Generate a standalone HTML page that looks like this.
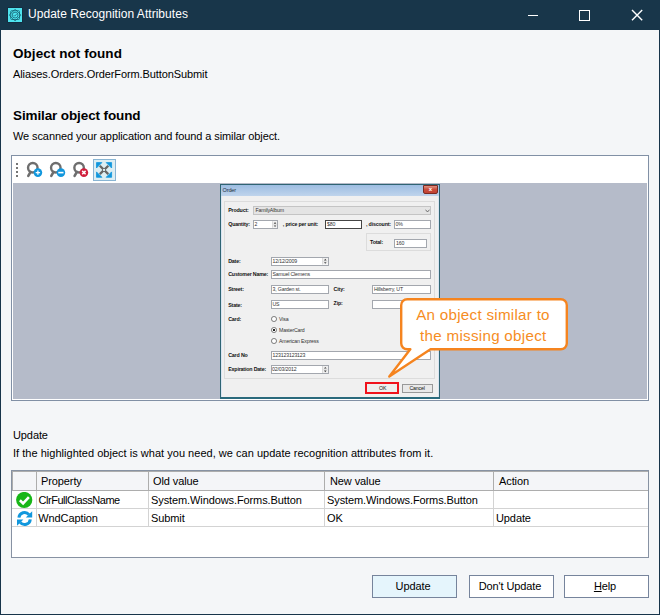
<!DOCTYPE html>
<html lang="en">
<head>
<meta charset="utf-8">
<title>Update Recognition Attributes</title>
<style>
html,body{margin:0;padding:0;}
body{width:660px;height:615px;overflow:hidden;background:#f4f6f8;font-family:"Liberation Sans",sans-serif;font-size:11px;color:#000;position:relative;}
.abs{position:absolute;}
#win{position:absolute;left:0;top:0;width:660px;height:615px;box-sizing:border-box;border-left:1px solid #17344a;border-right:1px solid #17344a;border-bottom:1px solid #17344a;background:#f4f6f8;}
#titlebar{position:absolute;left:0;top:0;width:660px;height:30px;background:#18364a;}
#title{position:absolute;left:28px;top:7px;font-size:12px;line-height:15px;color:#fff;white-space:nowrap;letter-spacing:0.04px;}
.t{position:absolute;white-space:nowrap;line-height:14px;letter-spacing:-0.1px;}
.h{position:absolute;white-space:nowrap;font-weight:bold;font-size:13.5px;line-height:16px;}
#panel{position:absolute;left:11px;top:155px;width:638px;height:246px;box-sizing:border-box;border:1px solid #8190a5;background:#fff;}
#gray{position:absolute;left:13px;top:183px;width:634px;height:216px;background:#b5bbc9;overflow:hidden;}
.btn{position:absolute;top:575px;width:85px;height:23px;box-sizing:border-box;border:1px solid #76849c;background:#fff;text-align:center;line-height:21px;letter-spacing:-0.1px;padding-right:3px;}
#grid{position:absolute;left:11px;top:470px;width:638px;height:88px;box-sizing:border-box;border:1px solid #8792a3;background:#fff;}

#ord{position:absolute;left:219.5px;top:183.5px;width:220.2px;height:215.3px;background:#f0f0f0;box-sizing:border-box;border:1px solid #2f6473;border-bottom:2px solid #2a6a7c;overflow:hidden;}
#ord .tb{position:absolute;left:0;top:0;width:218px;height:11px;background:linear-gradient(#9dbde2,#bfd4ec);}
#ord .fr{position:absolute;left:0;top:11px;width:218px;height:203px;box-sizing:border-box;border-left:1px solid #d9e5f2;border-right:1px solid #d9e5f2;border-bottom:1px solid #d9e5f2;}
#ord .l{position:absolute;font-size:5.3px;line-height:7px;font-weight:bold;white-space:nowrap;color:#111;letter-spacing:-0.17px;}
#ord .v{position:absolute;font-size:5.2px;line-height:7px;white-space:nowrap;color:#333;letter-spacing:-0.15px;}
#ord .i{position:absolute;box-sizing:border-box;border:1px solid #a3a7ae;background:#fff;}
#ord .gb{position:absolute;box-sizing:border-box;border:1px solid #dcdcdc;}
#ord .r{position:absolute;width:5.8px;height:5.8px;box-sizing:border-box;border:0.8px solid #777;border-radius:50%;background:#fff;}

#grid .hd{position:absolute;left:0;top:0;width:636px;height:20px;box-sizing:border-box;border-top:1px solid #adadad;border-left:1px solid #adadad;border-bottom:1px solid #adadad;background:#f4f5f8;}
#grid .vd{position:absolute;top:0;width:1px;height:20px;background:#adadad;}
#grid .vl{position:absolute;top:20px;width:1px;height:36px;background:#d3d3d3;}
#grid .hl{position:absolute;left:0;width:636px;height:1px;background:#d3d3d3;}
#grid .c{position:absolute;white-space:nowrap;line-height:14px;letter-spacing:-0.1px;}
</style>
</head>
<body>
<div id="win"></div>
<div id="titlebar"></div>
<div id="title">Update Recognition Attributes</div>


<!-- title icon -->
<svg class="abs" style="left:7px;top:7px;" width="16" height="16" viewBox="0 0 16 16">
  <rect x="0.5" y="0.5" width="15" height="15" fill="#0d2539"/>
  <rect x="1" y="1" width="14" height="14" fill="#4fe3ee"/>
  <g fill="none" stroke="#0f5565" stroke-width="0.7" stroke-linejoin="round">
    <rect x="3.7" y="3.7" width="8.8" height="8.8" rx="1"/>
    <rect x="3.9" y="3.9" width="8.4" height="8.4" rx="1" transform="rotate(45 8.1 8.1)"/>
    <circle cx="8.1" cy="8.1" r="2.9"/>
    <path d="M6.7 8.2 L7.7 9.2 L9.6 7.1"/>
  </g>
</svg>
<!-- window controls -->
<svg class="abs" style="left:520px;top:0;" width="140" height="30" viewBox="0 0 140 30">
  <rect x="8" y="15" width="10" height="1" fill="#fff"/>
  <rect x="59.5" y="10.5" width="10" height="10" fill="none" stroke="#fff" stroke-width="1"/>
  <path d="M112 10 L122.2 20.2 M122.2 10 L112 20.2" stroke="#fff" stroke-width="1.4" fill="none"/>
</svg>

<div class="h" style="left:13px;top:46px;letter-spacing:0.06px;">Object not found</div>
<div class="t" style="left:13px;top:67px;">Aliases.Orders.OrderForm.ButtonSubmit</div>
<div class="h" style="left:13px;top:108px;letter-spacing:-0.115px;">Similar object found</div>
<div class="t" style="left:13px;top:129px;">We scanned your application and found a similar object.</div>

<div id="panel"></div>
<div id="gray"></div>


<!-- toolbar -->
<svg class="abs" style="left:12px;top:156px;" width="110" height="27" viewBox="12 156 110 27">
  <g fill="#767676">
    <rect x="16" y="163" width="2" height="2"/><rect x="16" y="167" width="2" height="2"/>
    <rect x="16" y="171" width="2" height="2"/><rect x="16" y="175" width="2" height="2"/>
  </g>
  <g id="mag">
    <circle cx="32.8" cy="167.8" r="4.75" fill="none" stroke="#6e6e6e" stroke-width="2.4"/>
    <path d="M30.6 171.8 L28.3 175.8" stroke="#6e6e6e" stroke-width="2.6" stroke-linecap="round" fill="none"/>
  </g>
  <circle cx="37.9" cy="172.6" r="4.3" fill="#1197dd"/>
  <path d="M35.7 172.6 H40.1 M37.9 170.4 V174.8" stroke="#fff" stroke-width="1.3"/>
  <use href="#mag" x="23"/>
  <circle cx="60.9" cy="172.6" r="4.3" fill="#1197dd"/>
  <path d="M58.3 172.6 H63.5" stroke="#fff" stroke-width="1.6"/>
  <use href="#mag" x="46.3"/>
  <circle cx="83.9" cy="172.6" r="4.3" fill="#d01f3c"/>
  <path d="M82.2 170.9 L85.6 174.3 M85.6 170.9 L82.2 174.3" stroke="#fff" stroke-width="1.5"/>
  <rect x="93.5" y="159.5" width="22" height="21" fill="#dceef3" stroke="#88b4d3" stroke-width="1"/>
  <g fill="#1197dd" stroke="#1197dd" stroke-width="0.8" stroke-linejoin="round">
    <path d="M96.5 162.6 h5.4 l-5.4 5.4 z"/>
    <path d="M111.6 162.6 v5.4 l-5.4 -5.4 z"/>
    <path d="M96.5 177.3 v-5.4 l5.4 5.4 z"/>
    <path d="M111.6 177.3 h-5.4 l5.4 -5.4 z"/>
  </g>
  <path d="M99.8 165.8 L108.3 174.1 M108.3 165.8 L99.8 174.1" stroke="#666" stroke-width="2.3" fill="none"/>
  <rect x="102.4" y="168.3" width="3.3" height="3.3" fill="#666"/>
  <rect x="103.05" y="168.95" width="2" height="2" fill="#dceef3"/>
</svg>

<div id="ord"><div class="tb"></div><div class="fr"></div><div style="position:absolute;left:0.5px;top:0.5px;">
<div class="v" style="left:1.6px;top:1.8px;font-size:5.5px;color:#1b2b3c;">Order</div>
<div style="position:absolute;left:202.0px;top:0.0px;width:15px;height:8.5px;background:linear-gradient(#dd9180,#ca4c3c 50%,#c04232);border:1px solid #7a2a22;box-sizing:border-box;border-radius:0 0 2px 2px;color:#fff;font-size:6px;line-height:6.5px;text-align:center;font-weight:bold;">x</div>
<div class="gb" style="left:3.0px;top:16.0px;width:210.5px;height:177.5px;"></div>
<div class="l" style="left:7.2px;top:21.8px;">Product:</div>
<div class="i" style="left:32.0px;top:20.5px;width:178.0px;height:9.5px;background:#e4e4e4;border-color:#c4c4c4;"></div>
<div class="v" style="left:34.5px;top:22.0px;">FamilyAlbum</div>
<svg style="position:absolute;left:203.5px;top:23.5px;" width="5" height="4" viewBox="0 0 5 4"><path d="M0.5 0.7 L2.5 3 L4.5 0.7" fill="none" stroke="#555" stroke-width="0.8"/></svg>
<div class="l" style="left:7.2px;top:35.8px;">Quantity:</div>
<div class="i" style="left:32.0px;top:35.0px;width:25.0px;height:9.0px;"></div>
<div class="v" style="left:33.5px;top:35.8px;">2</div>
<svg style="position:absolute;left:50.5px;top:36.0px;" width="5.5" height="7.0" viewBox="0 0 6 7"><rect x="0" y="0" width="6" height="7" fill="#efefef"/><rect x="0" y="0" width="0.7" height="7" fill="#cfcfcf"/><rect x="0.7" y="3.3" width="5.3" height="0.5" fill="#d8d8d8"/><path d="M1.9 2.6 L3.3 0.9 L4.7 2.6 Z M1.9 4.5 L3.3 6.2 L4.7 4.5 Z" fill="#444"/></svg>
<div class="l" style="left:61.8px;top:35.8px;">, price per unit:</div>
<div class="i" style="left:104.0px;top:35.0px;width:37.0px;height:9.0px;border-color:#444;"></div>
<div class="v" style="left:106.0px;top:36.0px;">$80</div>
<div class="l" style="left:145.0px;top:35.8px;">, discount:</div>
<div class="i" style="left:173.0px;top:35.0px;width:37.0px;height:9.0px;"></div>
<div class="v" style="left:174.5px;top:36.0px;">0%</div>
<div class="gb" style="left:144.5px;top:48.0px;width:65.5px;height:17.5px;"></div>
<div class="l" style="left:149.0px;top:54.1px;">Total:</div>
<div class="i" style="left:173.0px;top:53.5px;width:33.0px;height:9.0px;"></div>
<div class="v" style="left:175.0px;top:54.5px;">160</div>
<div class="l" style="left:7.2px;top:72.5px;">Date:</div>
<div class="i" style="left:49.7px;top:72.0px;width:58.3px;height:8.5px;"></div>
<div class="v" style="left:51.5px;top:72.5px;">12/12/2009</div>
<svg style="position:absolute;left:101.0px;top:73.0px;" width="6.0" height="6.5" viewBox="0 0 6 7"><rect x="0" y="0" width="6" height="7" fill="#efefef"/><rect x="0" y="0" width="0.7" height="7" fill="#cfcfcf"/><rect x="0.7" y="3.3" width="5.3" height="0.5" fill="#d8d8d8"/><path d="M1.9 2.6 L3.3 0.9 L4.7 2.6 Z M1.9 4.5 L3.3 6.2 L4.7 4.5 Z" fill="#444"/></svg>
<div class="l" style="left:7.2px;top:85.7px;">Customer Name:</div>
<div class="i" style="left:49.7px;top:85.0px;width:160.3px;height:9.0px;"></div>
<div class="v" style="left:51.5px;top:86.0px;">Samuel Clemens</div>
<div class="l" style="left:7.2px;top:100.8px;">Street:</div>
<div class="i" style="left:49.7px;top:100.2px;width:58.3px;height:8.8px;"></div>
<div class="v" style="left:51.5px;top:101.0px;">3, Garden st.</div>
<div class="l" style="left:112.6px;top:101.1px;">City:</div>
<div class="i" style="left:151.0px;top:100.2px;width:59.0px;height:8.8px;"></div>
<div class="v" style="left:153.0px;top:101.0px;">Hillsberry, UT</div>
<div class="l" style="left:7.2px;top:117.0px;">State:</div>
<div class="i" style="left:49.7px;top:115.0px;width:58.3px;height:8.5px;"></div>
<div class="v" style="left:51.5px;top:115.8px;">US</div>
<div class="l" style="left:112.6px;top:114.5px;">Zip:</div>
<div class="i" style="left:151.0px;top:115.0px;width:59.0px;height:8.5px;"></div>
<div class="l" style="left:7.2px;top:130.8px;">Card:</div>
<div class="r" style="left:50.0px;top:130.9px;"></div>
<div class="v" style="left:58.0px;top:130.8px;">Visa</div>
<div class="r" style="left:50.0px;top:141.9px;background:radial-gradient(#222 35%,#fff 45%);"></div>
<div class="v" style="left:58.0px;top:141.8px;">MasterCard</div>
<div class="r" style="left:50.0px;top:152.9px;"></div>
<div class="v" style="left:58.0px;top:152.8px;">American Express</div>
<div class="l" style="left:7.2px;top:166.8px;">Card No</div>
<div class="i" style="left:49.7px;top:166.0px;width:160.3px;height:8.5px;"></div>
<div class="v" style="left:51.5px;top:166.8px;">123123123123</div>
<div class="l" style="left:7.2px;top:180.8px;">Expiration Date:</div>
<div class="i" style="left:49.7px;top:179.7px;width:58.3px;height:9.0px;"></div>
<div class="v" style="left:51.0px;top:180.8px;">02/03/2012</div>
<svg style="position:absolute;left:101.0px;top:180.7px;" width="6.0" height="7.0" viewBox="0 0 6 7"><rect x="0" y="0" width="6" height="7" fill="#efefef"/><rect x="0" y="0" width="0.7" height="7" fill="#cfcfcf"/><rect x="0.7" y="3.3" width="5.3" height="0.5" fill="#d8d8d8"/><path d="M1.9 2.6 L3.3 0.9 L4.7 2.6 Z M1.9 4.5 L3.3 6.2 L4.7 4.5 Z" fill="#444"/></svg>
<div class="i" style="left:144.5px;top:198.0px;width:32.0px;height:10.0px;border:1px solid #f0121c;background:#eee;outline:0.5px solid #f0121c;"></div>
<div class="v" style="left:158.0px;top:199.5px;color:#111;">OK</div>
<div class="i" style="left:180.6px;top:198.5px;width:31.4px;height:9.0px;border-color:#999;background:#e9e9e9;"></div>
<div class="v" style="left:188.5px;top:199.5px;color:#111;">Cancel</div>
</div></div>
<!-- callout -->
<svg class="abs" style="left:380px;top:290px;" width="200" height="100" viewBox="380 290 200 100">
  <path d="M407.2 299.2 H560.8 a6 6 0 0 1 6 6 V343.3 a6 6 0 0 1 -6 6 H430.5 L389.3 376.6 L410.3 349.3 H407.2 a6 6 0 0 1 -6 -6 V305.2 a6 6 0 0 1 6 -6 Z" fill="#fff" stroke="#f5841f" stroke-width="2.4" stroke-linejoin="round"/>
  <text x="483" y="319.8" text-anchor="middle" font-family="Liberation Sans, sans-serif" font-size="15.2" letter-spacing="0.27" fill="#f68d1f">An object similar to</text>
  <text x="483.3" y="340.8" text-anchor="middle" font-family="Liberation Sans, sans-serif" font-size="15.2" letter-spacing="0.27" fill="#f68d1f">the missing object</text>
</svg>

<div class="t" style="left:13px;top:428px;">Update</div>
<div class="t" style="left:13px;top:446px;letter-spacing:0.022px;">If the highlighted object is what you need, we can update recognition attributes from it.</div>

<div id="grid"><div class="hd"></div>
<div class="vd" style="left:24px;"></div><div class="vl" style="left:24px;"></div>
<div class="vd" style="left:136px;"></div><div class="vl" style="left:136px;"></div>
<div class="vd" style="left:312px;"></div><div class="vl" style="left:312px;"></div>
<div class="vd" style="left:481px;"></div><div class="vl" style="left:481px;"></div>
<div class="hl" style="top:37px;"></div><div class="hl" style="top:55px;"></div>
<div class="c" style="left:29px;top:3px;">Property</div>
<div class="c" style="left:141px;top:3px;">Old value</div>
<div class="c" style="left:318px;top:3px;">New value</div>
<div class="c" style="left:487px;top:3px;">Action</div>
<div class="c" style="left:26.5px;top:22px;letter-spacing:-0.46px;">ClrFullClassName</div>
<div class="c" style="left:139px;top:22px;">System.Windows.Forms.Button</div>
<div class="c" style="left:315px;top:22px;">System.Windows.Forms.Button</div>
<div class="c" style="left:26.3px;top:40px;">WndCaption</div>
<div class="c" style="left:139px;top:40px;">Submit</div>
<div class="c" style="left:315px;top:40px;">OK</div>
<div class="c" style="left:484px;top:40px;">Update</div>
<svg style="position:absolute;left:4px;top:21px;" width="17" height="35" viewBox="16 492 17 35">
  <circle cx="24.2" cy="500" r="8.1" fill="#18b618"/>
  <path d="M19.9 500.3 L23.1 503.4 L28.9 497.2" fill="none" stroke="#fff" stroke-width="2.6"/>
  <g fill="none" stroke="#1197dd" stroke-width="3">
    <path d="M18.9 517.6 A5.7 5.7 0 0 1 29 514.6"/>
    <path d="M30.3 519.4 A5.7 5.7 0 0 1 20.2 522.4"/>
  </g>
  <path d="M32.2 511.2 V517.6 H25.8 Z" fill="#1197dd"/>
  <path d="M17 525.8 V519.4 H23.4 Z" fill="#1197dd"/>
</svg>
</div>

<div class="btn" style="left:372px;background:#e5f5fc;">Update</div>
<div class="btn" style="left:469px;">Don't Update</div>
<div class="btn" style="left:564px;"><u>H</u>elp</div>
</body>
</html>
